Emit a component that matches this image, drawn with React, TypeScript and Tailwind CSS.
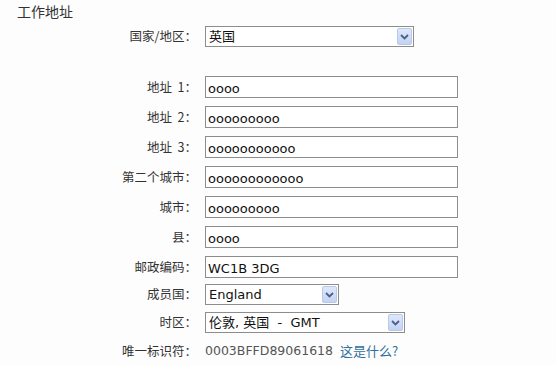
import React from "react";

const cjk = '"Noto Sans CJK SC", "DejaVu Sans", sans-serif';
const latin = '"DejaVu Sans", "Noto Sans CJK SC", sans-serif';

function Chevron() {
    return (
        <svg width="9" height="6" viewBox="0 0 9 6" className="block">
            <path d="M1 1 L4.5 4.5 L8 1" fill="none" stroke="#4a5f8a" strokeWidth="1.8" />
        </svg>
    );
}

function Select({ value, width }: { value: string; width: string }) {
    return (
        <div
            className={`${width} h-[21px] flex items-center justify-between border border-[#8d8d8d] bg-white pl-[3px] pr-[1px]`}
        >
            <span className="text-[13px] leading-none text-[#111] whitespace-pre" style={{ fontFamily: latin }}>{value}</span>
            <span className="w-[15px] h-[17px] flex items-center justify-center rounded-[2px] border border-[#b7c8ea] bg-gradient-to-b from-[#dfe8fa] to-[#c2d3f2]">
                <Chevron />
            </span>
        </div>
    );
}

function Field({ value }: { value: string }) {
    return (
        <div className="w-[253px] h-[22px] flex items-center border border-[#8d8d8d] bg-white pl-[2px] pt-[2px]">
            <span className="text-[13px] leading-none text-[#111]" style={{ fontFamily: latin }}>{value}</span>
        </div>
    );
}

function Label({ children }: { children: React.ReactNode }) {
    return (
        <div className="w-[197px] text-right text-[12.5px] text-[#333] whitespace-pre" style={{ fontFamily: cjk }}>
            {children}
        </div>
    );
}

export default function App() {
    const fields = [
        { label: "地址  1：", value: "oooo" },
        { label: "地址  2：", value: "ooooooooo" },
        { label: "地址  3：", value: "ooooooooooo" },
        { label: "第二个城市：", value: "oooooooooooo" },
        { label: "城市：", value: "ooooooooo" },
        { label: "县：", value: "oooo" },
        { label: "邮政编码：", value: "WC1B 3DG" },
    ];

    return (
        <div className="w-[556px] h-[365px] bg-[#fdfdfd] overflow-hidden">
            {/* Heading */}
            <div className="pl-[17px] pt-[1px] text-[14px] leading-[20px] text-[#333]" style={{ fontFamily: cjk }}>
                工作地址
            </div>

            {/* Country */}
            <div className="mt-[5px] flex items-center gap-2">
                <Label>国家/地区：</Label>
                <Select value="英国" width="w-[209px]" />
            </div>

            {/* Address fields */}
            <div className="mt-[29px] flex flex-col gap-2">
                {fields.map((f) => (
                    <div key={f.label} className="flex items-center gap-2">
                        <Label>{f.label}</Label>
                        <Field value={f.value} />
                    </div>
                ))}
            </div>

            <div className="mt-[6px] flex flex-col gap-[7px]">
                <div className="flex items-center gap-2">
                    <Label>成员国：</Label>
                    <Select value="England" width="w-[134px]" />
                </div>
                <div className="flex items-center gap-2">
                    <Label>时区：</Label>
                    <Select value="伦敦, 英国  -  GMT" width="w-[200px]" />
                </div>
            </div>

            {/* Unique id */}
            <div className="mt-[8px] h-[20px] flex items-center gap-2">
                <Label>唯一标识符：</Label>
                <div className="flex items-center gap-[7px] text-[12.5px]" style={{ fontFamily: latin }}>
                    <span className="text-[#555]">0003BFFD89061618</span>
                    <a href="#" className="text-[#2f6f9c] text-[13px]" style={{ fontFamily: cjk }}>这是什么?</a>
                </div>
            </div>
        </div>
    );
}
